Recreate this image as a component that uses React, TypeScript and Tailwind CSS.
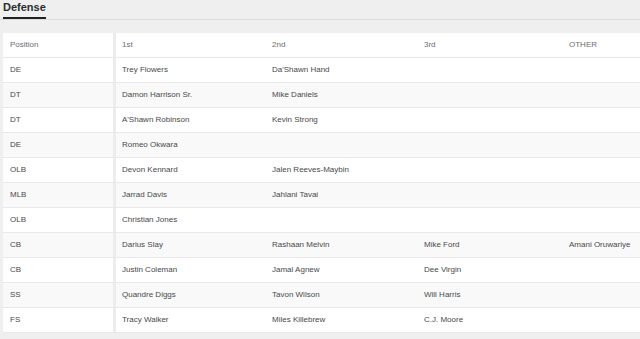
const rows: [string, string, string, string, string][] = [
  ["DE", "Trey Flowers", "Da'Shawn Hand", "", ""],
  ["DT", "Damon Harrison Sr.", "Mike Daniels", "", ""],
  ["DT", "A'Shawn Robinson", "Kevin Strong", "", ""],
  ["DE", "Romeo Okwara", "", "", ""],
  ["OLB", "Devon Kennard", "Jalen Reeves-Maybin", "", ""],
  ["MLB", "Jarrad Davis", "Jahlani Tavai", "", ""],
  ["OLB", "Christian Jones", "", "", ""],
  ["CB", "Darius Slay", "Rashaan Melvin", "Mike Ford", "Amani Oruwariye"],
  ["CB", "Justin Coleman", "Jamal Agnew", "Dee Virgin", ""],
  ["SS", "Quandre Diggs", "Tavon Wilson", "Will Harris", ""],
  ["FS", "Tracy Walker", "Miles Killebrew", "C.J. Moore", ""],
];

function Row({ cells, header, shaded }: { cells: string[]; header?: boolean; shaded?: boolean }) {
  const bg = shaded ? "bg-[#f9f9f9]" : "bg-white";
  const color = header ? "text-[#6c6d6f]" : "text-[#48494a]";
  return (
    <div className={`flex h-[25px] border-b border-[#e9e9e9] ${bg} ${color}`}>
      <div className="flex w-[113px] shrink-0 items-center border-r-[3px] border-[#ececec] pl-[7px]">
        {cells[0]}
      </div>
      <div className="flex w-[150px] shrink-0 items-center pl-[6px]">{cells[1]}</div>
      <div className="flex w-[152px] shrink-0 items-center pl-[6px]">{cells[2]}</div>
      <div className="flex w-[145px] shrink-0 items-center pl-[6px]">{cells[3]}</div>
      <div className="flex flex-1 items-center pl-[6px]">{cells[4]}</div>
    </div>
  );
}

export default function App() {
  return (
    <div
      className="h-[339px] w-[640px] overflow-hidden bg-[#efefef] text-[8px]"
      style={{ fontFamily: '"Liberation Sans", Arial, sans-serif' }}
    >
      <div className="flex h-[20px] border-b border-[#dcdcdc] pl-[3px]">
        <div className="h-[19px] border-b-2 border-[#222] pt-[1px] text-[11px] font-bold leading-[13px] text-[#2b2c2d]">
          Defense
        </div>
      </div>
      <div className="mt-[13px] pl-[3px]">
        <Row cells={["Position", "1st", "2nd", "3rd", "OTHER"]} header />
        {rows.map((r, i) => (
          <Row key={i} cells={r} shaded={i % 2 === 1} />
        ))}
      </div>
    </div>
  );
}
